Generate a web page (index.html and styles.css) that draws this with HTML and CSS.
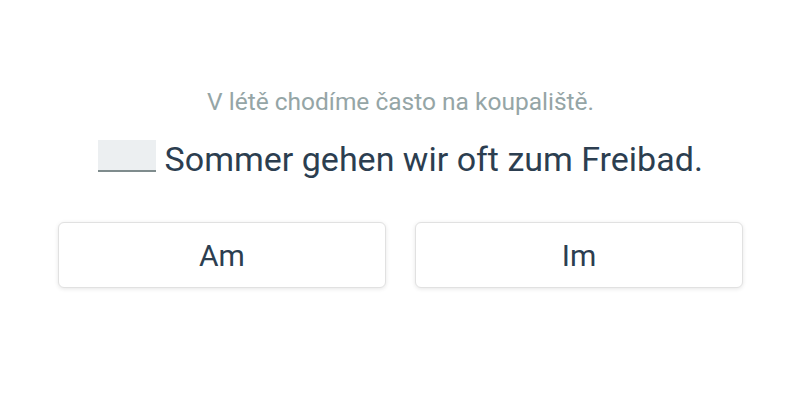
FILE: index.html
```html
<!DOCTYPE html>
<html>
<head>
<meta charset="utf-8">
<link rel="stylesheet" href="styles.css">
</head>
<body>
<main class="exercise">
  <p class="hint">V létě chodíme často na koupaliště.</p>
  <p class="sentence"><span class="blank"></span> Sommer gehen wir oft zum Freibad.</p>
  <div class="options">
    <button class="option">Am</button>
    <button class="option">Im</button>
  </div>
</main>
</body>
</html>
```

FILE: styles.css
```css
html, body {
  margin: 0;
  background: #ffffff;
}
body {
  font-family: Roboto, "Liberation Sans", sans-serif;
  color: #2c3e50;
}
.exercise {
  width: 800px;
  height: 400px;
  box-sizing: border-box;
  padding: 86px 57px 0 58px;
  display: flex;
  flex-direction: column;
  align-items: center;
}
.hint {
  margin: 0;
  font-size: 24.5px;
  line-height: 32px;
  color: #95a5a6;
}
.sentence {
  margin: 21px 0 0;
  font-size: 34px;
  line-height: 40px;
  color: #2c3e50;
}
.blank {
  display: inline-block;
  width: 58px;
  height: 30px;
  background: #eceff1;
  border-bottom: 2px solid #7f8c8d;
  vertical-align: -1px;
}
.options {
  margin-top: 43px;
  width: 100%;
  display: grid;
  grid-template-columns: 1fr 1fr;
  gap: 29px;
}
.option {
  height: 66px;
  background: #ffffff;
  border: 1px solid #e1e1e1;
  border-radius: 6px;
  box-shadow: 0 1px 4px rgba(0, 0, 0, 0.1);
  font-family: Roboto, "Liberation Sans", sans-serif;
  font-size: 30px;
  color: #2c3e50;
  cursor: pointer;
}
```
